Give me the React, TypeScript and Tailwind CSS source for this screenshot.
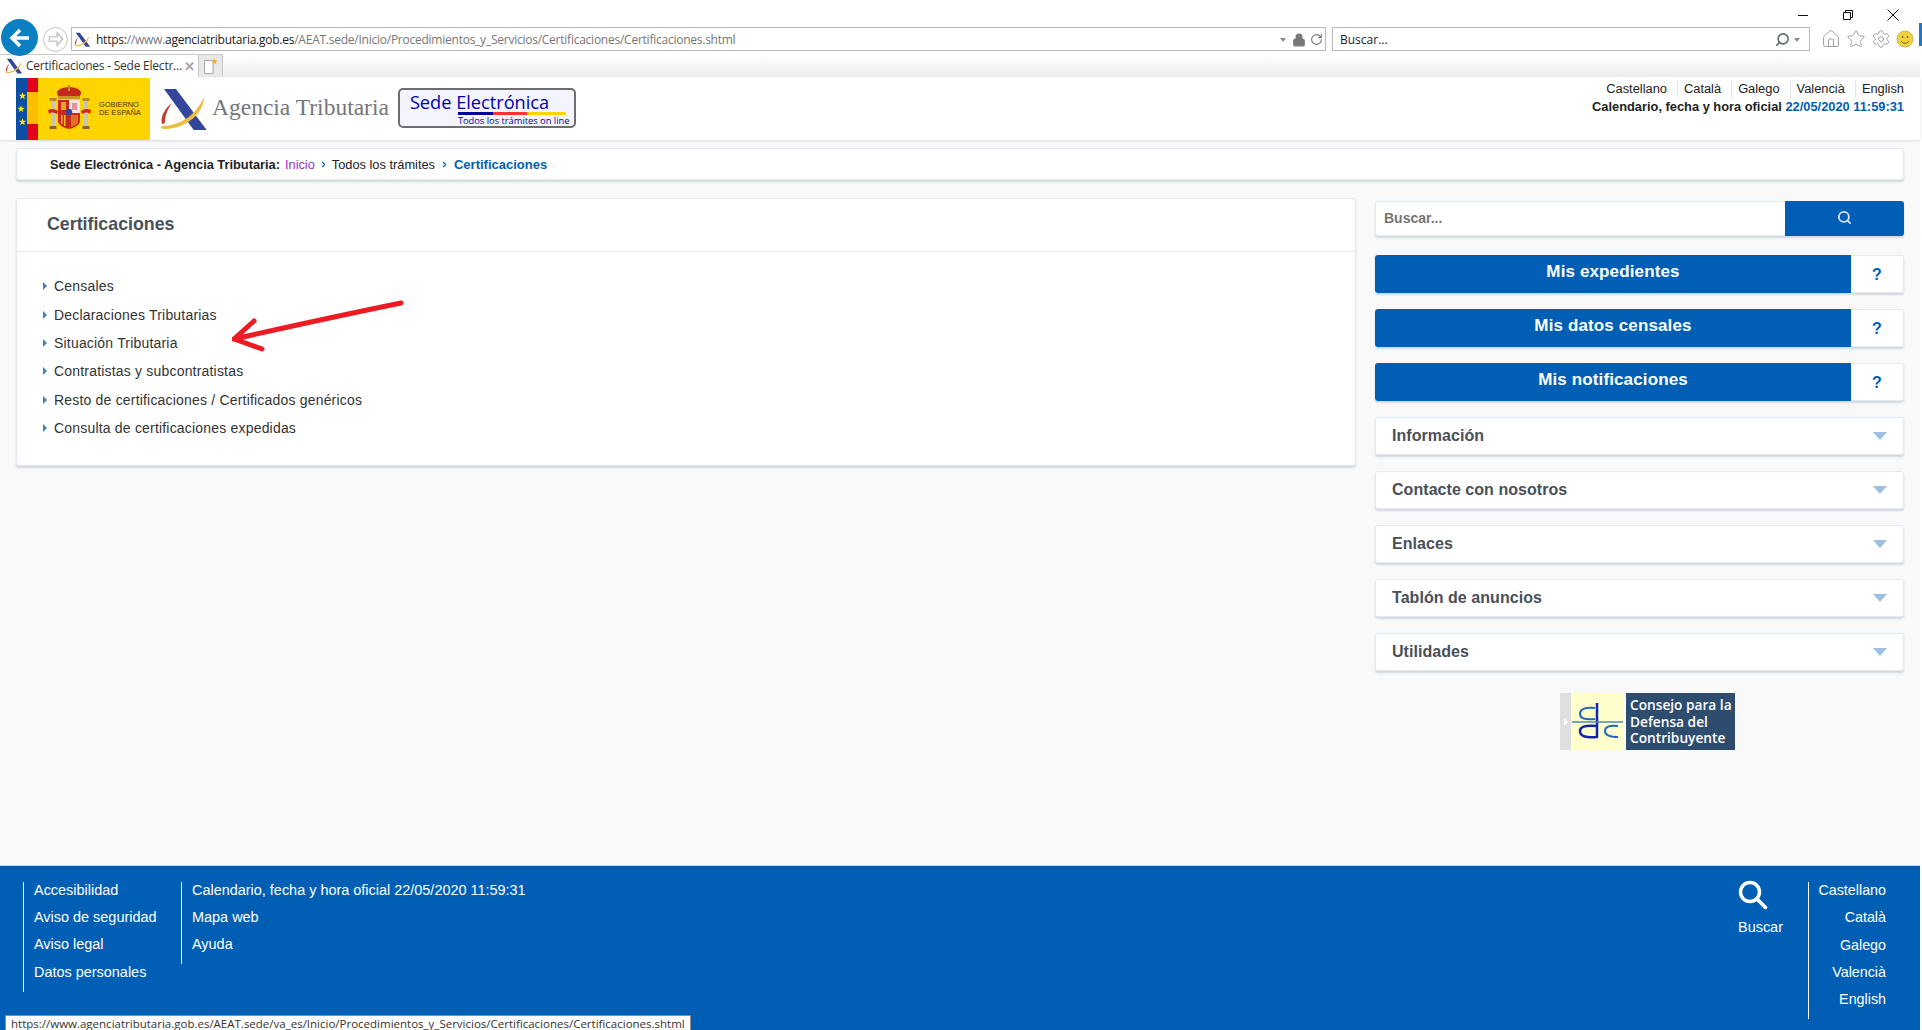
import React from "react";
import { Home, Star, Settings, Search, RotateCw, Lock, ChevronRight } from "lucide-react";

function AeatMark({ className }: { className: string }) {
  return (
    <svg className={className} viewBox="0 0 50 44">
      <path d="M5 2H17L47.7 43H34.7Z" fill="#34459c" />
      <path d="M45 10C45 27 25 43 4 42C1 41 2 38.500 5 39C22 38 37 28 45 10Z" fill="#edbd3e" />
      <path d="M13 16C6 21 1 30 3 37C5 37 5.500 36 6 35C6 29 8 23 13 16Z" fill="#c23b2b" />
    </svg>
  );
}

const STAR = "M0 -3.800L1 -1.200 3.700 -1.200 1.500 .5 2.300 3.200 0 1.600 -2.300 3.200 -1.500 .5 -3.700 -1.200 -1 -1.200Z";

function GobiernoLogo() {
  return (
    <svg className="w-[134px] h-[62px] shrink-0" viewBox="0 0 134 62">
      <rect width="134" height="62" fill="#ffd400" />
      <rect width="11.500" height="62" fill="#0b4ea2" />
      <rect x="11" width="11" height="62" fill="#e3001b" />
      <rect x="11" y="14" width="11" height="32" fill="#ffbd00" />
      <g fill="#ffe600">
        <path transform="translate(6.500 18)" d={STAR} />
        <path transform="translate(5 31)" d={STAR} />
        <path transform="translate(6.500 44)" d={STAR} />
      </g>
      <rect x="35" y="22" width="4" height="26" fill="#c9c4b2" />
      <rect x="68" y="22" width="4" height="26" fill="#c9c4b2" />
      <rect x="33.500" y="20" width="7" height="3" fill="#b98a1e" />
      <rect x="66.500" y="20" width="7" height="3" fill="#b98a1e" />
      <rect x="33.500" y="48" width="7" height="3" fill="#8a6a1a" />
      <rect x="66.500" y="48" width="7" height="3" fill="#8a6a1a" />
      <path d="M32 32C36 30 39 31 42 33L41 36C38 34 35 34 33 36ZM75 32C71 30 68 31 65 33L66 36C69 34 72 34 74 36Z" fill="#d8261c" />
      <ellipse cx="53" cy="15" rx="12" ry="6" fill="#c5281c" />
      <rect x="42" y="18" width="22" height="3" fill="#c9971c" />
      <rect x="52" y="7" width="2" height="6" fill="#b98a1e" />
      <path d="M42 22H64V43C64 47 58 50 53 51C48 50 42 47 42 43Z" fill="#c8281e" />
      <rect x="53" y="22" width="11" height="13" fill="#efe6e2" />
      <path d="M56 25h5v7h-5z" fill="#e58fa0" />
      <path d="M45 24h5v8h-5z" fill="#e0a91f" />
      <path d="M45 37h1.500v9H45zM48 37h1.500v11H48z" fill="#f0b92a" />
      <path d="M55 37h7v7c-1 3-4 4-7 5z" fill="#e3701f" />
      <circle cx="53" cy="34" r="3.200" fill="#264a9c" />
      <text x="83" y="29" fontFamily="'Liberation Sans', sans-serif" fontSize="7.400" fill="#3f3408">GOBIERNO</text>
      <text x="83" y="37" fontFamily="'Liberation Sans', sans-serif" fontSize="7.400" fill="#3f3408">DE ESPAÑA</text>
    </svg>
  );
}

function SedeBadge() {
  return (
    <div className="ml-[9px] mt-[11px] w-[178px] h-[40px] shrink-0 rounded-[5px] border-2 border-[#6e6e6e] bg-[#f4f4ff] pl-[10px] pt-[1px] text-[#0000aa] font-['Open_Sans',sans-serif]">
      <div className="text-[18.200px] leading-[22px] whitespace-nowrap">
        Sede <span>Electrónica</span>
      </div>
      <div className="ml-[48px] mt-[-1px] flex h-[3px] w-[108px]">
        <div className="w-[35px] bg-[#000099]" />
        <div className="w-[34px] bg-[#ff3333]" />
        <div className="w-[39px] bg-[#ffd400]" />
      </div>
      <div className="ml-[48px] text-[9.300px] leading-[11px] whitespace-nowrap">Todos los trámites on line</div>
    </div>
  );
}

function ConsejoBanner() {
  return (
    <div className="mt-[22px] ml-[185px] flex h-[57px] w-[175px] bg-white">
      <div className="flex w-[11px] items-center justify-center bg-[#dfdfdf]">
        <div className="h-0 w-0 border-y-[4px] border-l-[4px] border-y-transparent border-l-white" />
      </div>
      <div className="w-[53px] bg-[#ffffcc]">
        <svg className="h-[57px] w-[53px]" viewBox="0 0 53 57" fill="none">
          <path d="M26 10V45" stroke="#1024b0" strokeWidth="2.500" />
          <path d="M1 29H52" stroke="#4f86b8" strokeWidth="1.500" />
          <path d="M24 15C12 14 9 17 9 21C9 25 13 27 24 26" stroke="#1f68c0" strokeWidth="2" />
          <path d="M26 33C13 32 9 34 9 38C9 43 14 45 26 44" stroke="#1024b0" strokeWidth="2.500" />
          <path d="M47 33C38 32 34 34 34 38C34 42 38 44 47 44" stroke="#1f68c0" strokeWidth="2" />
        </svg>
      </div>
      <div className="ml-[2px] flex-1 bg-[#2e4d6e] pl-[4px] pt-[4px] font-['Open_Sans',sans-serif] text-[13.700px] font-semibold leading-[16.500px] text-white whitespace-nowrap">
        <div>Consejo para la</div>
        <div>Defensa del</div>
        <div>Contribuyente</div>
      </div>
    </div>
  );
}

function BrowserChrome() {
  return (
    <div className="relative h-[77px] shrink-0 bg-white font-['Open_Sans',sans-serif] text-[#222]">
      <div className="flex h-[27px] justify-end pr-[21px] pt-[9px]">
        <svg className="h-[12px] w-[12px]" viewBox="0 0 12 12"><path d="M1 6.500H11" stroke="#111" /></svg>
        <svg className="ml-[33px] h-[12px] w-[12px]" viewBox="0 0 12 12" fill="none" stroke="#111"><path d="M1.500 3.500H8.500V10.500H1.500ZM3.500 3.500V1.500H10.500V8.500H8.500" /></svg>
        <svg className="ml-[33px] h-[12px] w-[12px]" viewBox="0 0 12 12"><path d="M0.500 0.500L11.500 11.500M11.500 0.500L0.500 11.500" stroke="#111" /></svg>
      </div>
      <div className="flex h-[24px] items-center">
        <div className="z-10 ml-[43px] flex h-[25px] w-[25px] items-center justify-center rounded-full border border-[#c4c4c4] bg-white">
          <svg className="h-[18px] w-[18px]" viewBox="0 0 16 16" fill="none" stroke="#b5b5b5"><path d="M2 6H9V2.500L14 8L9 13.500V10H2Z" /></svg>
        </div>
        <div className="ml-[3px] flex h-[24px] w-[1255px] items-center border border-[#b9b9b9] pl-[2px] pt-[1px] text-[12px] whitespace-nowrap">
          <AeatMark className="h-[15px] w-[17px]" />
          <span className="ml-[5px] tracking-[-0.245px] text-[#777]">
            <span className="text-[#222]">https:</span>//www.<span className="text-[#222]">agenciatributaria.gob.es</span>/AEAT.sede/Inicio/Procedimientos_y_Servicios/Certificaciones/Certificaciones.shtml
          </span>
          <div className="ml-auto flex items-center pr-[2px] text-[#777]">
            <div className="mr-[6px] h-0 w-0 border-x-[3.500px] border-t-[4px] border-x-transparent border-t-[#888]" />
            <Lock size={14} fill="#777" strokeWidth={2} className="mr-[2px]" />
            <RotateCw size={13} strokeWidth={2} className="ml-[2px]" />
          </div>
        </div>
        <div className="ml-[6px] flex h-[24px] w-[478px] items-center border border-[#b9b9b9] pl-[7px] pt-[1px] text-[12px] text-[#222]">
          Buscar...
          <Search size={15} strokeWidth={2.500} className="ml-auto -scale-x-100 text-[#5f6b70]" />
          <div className="ml-[4px] mr-[9px] h-0 w-0 border-x-[3.500px] border-t-[4px] border-x-transparent border-t-[#888]" />
        </div>
        <div className="ml-[11px] flex items-center gap-[5px] text-[#8f8f8f]">
          <Home size={20} strokeWidth={1} />
          <Star size={20} strokeWidth={1} />
          <Settings size={20} strokeWidth={1} />
          <svg className="h-[18px] w-[18px]" viewBox="0 0 18 18">
            <circle cx="9" cy="9" r="8" fill="#f2d13e" stroke="#c9b659" />
            <circle cx="6.500" cy="7" r="1" fill="#7a6a20" />
            <circle cx="11.500" cy="7" r="1" fill="#7a6a20" />
            <path d="M5 11C7 14 11 14 13 11" fill="none" stroke="#7a6a20" />
          </svg>
        </div>
      </div>
      <div className="mt-[3px] flex h-[23px] bg-gradient-to-b from-white to-[#eeeeee]">
        <div className="flex w-[199px] items-center border-t border-r border-[#c9c9c9] bg-white pl-[5px] text-[12px] whitespace-nowrap">
          <AeatMark className="h-[16px] w-[18px]" />
          <span className="ml-[3px] tracking-[-0.230px] text-[#333]">Certificaciones - Sede Electr...</span>
          <span className="ml-auto mr-[3px] text-[13px] font-bold leading-none text-[#a5a5a5]">✕</span>
        </div>
        <div className="flex w-[24px] items-center justify-center border-t border-r border-[#c9c9c9] bg-[#e8e8e8]">
          <svg className="h-[18px] w-[16px]" viewBox="0 0 16 18">
            <path d="M1.500 3.500H10V16.500H1.500Z" fill="#fff" stroke="#a9a9a9" />
            <path d="M11.500 1L12.300 3.200 14.500 3.500 12.800 5 13.300 7.200 11.500 6 9.700 7.200 10.200 5 8.500 3.500 10.700 3.200Z" fill="#f5a623" />
          </svg>
        </div>
      </div>
      <div className="absolute left-[1px] top-[19px] z-20 flex h-[37px] w-[37px] items-center justify-center rounded-full bg-[#0a80c3]">
        <svg className="h-[24px] w-[24px]" viewBox="0 0 24 24" fill="none" stroke="#fff" strokeWidth="3.500"><path d="M21 12H4M12 4L4 12L12 20" /></svg>
      </div>
    </div>
  );
}

function PageHeader() {
  return (
    <div className="relative z-10 flex h-[63px] shrink-0 bg-white pl-[16px] shadow-[0_1px_2px_rgba(0,0,0,0.12)]">
      <div className="mt-[1px]"><GobiernoLogo /></div>
      <AeatMark className="ml-[9px] mt-[10px] h-[44px] w-[50px] shrink-0" />
      <div className="ml-[3px] mt-[15px] font-['Liberation_Serif',serif] text-[23.500px] leading-[30px] whitespace-nowrap text-[#75777a]">Agencia Tributaria</div>
      <SedeBadge />
      <div className="ml-auto pr-[16px] pt-[4px] text-right text-[12.850px] text-[#222]">
        <div className="flex h-[17px] justify-end leading-[16px]">
          {["Castellano", "Català", "Galego", "Valencià"].map((l) => (
            <span key={l} className="mr-[6px] border-r border-[#dfe5ee] pr-[10px]">{l}</span>
          ))}
          <span>English</span>
        </div>
        <div className="mt-[1px] leading-[16px] font-bold">
          Calendario, fecha y hora oficial <span className="text-[#005fb5]">22/05/2020 11:59:31</span>
        </div>
      </div>
    </div>
  );
}

const card = "rounded-[3px] border border-[#e4eaf2] bg-white shadow-[0_2px_2px_rgba(120,140,170,0.3)]";
const links = ["Censales", "Declaraciones Tributarias", "Situación Tributaria", "Contratistas y subcontratistas", "Resto de certificaciones / Certificados genéricos", "Consulta de certificaciones expedidas"];

function MainCard() {
  return (
    <div className={`${card} relative h-[268px] w-[1340px] shrink-0`}>
      <div className="flex h-[53px] items-center border-b border-[#e4eaf2] pb-[1px] pl-[30px] text-[17.800px] font-bold text-[#4a5058]">Certificaciones</div>
      <ul className="pl-[26px] pt-[20.500px] text-[14px] text-[#333]">
        {links.map((t) => (
          <li key={t} className="flex h-[28.400px] items-center">
            <div className="mb-[1px] h-0 w-0 border-y-[4.500px] border-l-[4px] border-y-transparent border-l-[#3f7fbd]" />
            <span className="ml-[7px] tracking-[0.190px]">{t}</span>
          </li>
        ))}
      </ul>
      <svg className="absolute left-[215px] top-[100px] h-[55px] w-[175px]" viewBox="0 0 175 55" fill="none" stroke="#ed1c24" strokeWidth="5" strokeLinecap="round" strokeLinejoin="round">
        <path d="M169 4C120 14 60 27 2 40M22 22L2 40L30 50" />
      </svg>
    </div>
  );
}

function ActionButton({ label }: { label: string }) {
  return (
    <div className="flex h-[38px] rounded-[3px] shadow-[0_2px_2px_rgba(120,140,170,0.3)]">
      <div className="flex w-[476px] justify-center rounded-l-[3px] bg-[#005fb5] pt-[7px] text-[17px] font-bold leading-[20px] tracking-[0.130px] text-white">{label}</div>
      <div className="flex flex-1 items-center justify-center rounded-r-[3px] border border-l-0 border-[#e4eaf2] bg-white pt-[2px] text-[16px] font-bold text-[#005fb5]">?</div>
    </div>
  );
}

function Accordion({ label }: { label: string }) {
  return (
    <div className={`${card} flex h-[38px] items-center justify-between pl-[16px] pr-[16px] text-[16px] font-bold tracking-[0.050px] text-[#4a5058]`}>
      {label}
      <div className="h-0 w-0 border-x-[7.500px] border-t-[8px] border-x-transparent border-t-[#9dbfe0]" />
    </div>
  );
}

function Sidebar() {
  return (
    <div className="ml-[19px] w-[529px] shrink-0 pt-[3px]">
      <div className="flex h-[35px] rounded-[3px] shadow-[0_2px_2px_rgba(120,140,170,0.3)]">
        <div className="flex flex-1 items-center rounded-l-[3px] border border-r-0 border-[#e4eaf2] bg-white pl-[8px] text-[14px] font-bold text-[#757575]">Buscar...</div>
        <div className="flex w-[119px] items-center justify-center rounded-r-[3px] bg-[#005fb5] pb-[2px]">
          <Search size={15} strokeWidth={3} className="text-[#d5e4f3]" />
        </div>
      </div>
      <div className="mt-[19px] flex flex-col gap-[16px]">
        <ActionButton label="Mis expedientes" />
        <ActionButton label="Mis datos censales" />
        <ActionButton label="Mis notificaciones" />
      </div>
      <div className="mt-[16px] flex flex-col gap-[16px]">
        {["Información", "Contacte con nosotros", "Enlaces", "Tablón de anuncios", "Utilidades"].map((l) => (
          <Accordion key={l} label={l} />
        ))}
      </div>
      <ConsejoBanner />
    </div>
  );
}

function Footer() {
  return (
    <div className="relative flex h-[165px] shrink-0 border-t border-[#c9d4e0] bg-[#005fb5] pt-[16px] text-[14.450px] text-white">
      <div className="ml-[23px] flex h-[110px] w-[158px] flex-col border-l border-white pl-[10px]">
        {["Accesibilidad", "Aviso de seguridad", "Aviso legal", "Datos personales"].map((t) => (
          <div key={t} className="h-[27.200px] leading-[16px] whitespace-nowrap">{t}</div>
        ))}
      </div>
      <div className="flex h-[82px] flex-col border-l border-white pl-[10px]">
        {["Calendario, fecha y hora oficial 22/05/2020 11:59:31", "Mapa web", "Ayuda"].map((t) => (
          <div key={t} className="h-[27.200px] leading-[16px] whitespace-nowrap">{t}</div>
        ))}
      </div>
      <div className="ml-auto flex w-[45px] flex-col items-start">
        <svg className="-mt-[2px] h-[30px] w-[30px]" viewBox="0 0 30 30" fill="none" stroke="#fff" strokeWidth="3.500" strokeLinecap="round">
          <circle cx="12" cy="12" r="9.500" />
          <path d="M19 19L27.500 27.500" />
        </svg>
        <div className="mt-[9px] leading-[16px]">Buscar</div>
      </div>
      <div className="ml-[25px] mr-[34px] flex h-[137px] w-[78px] flex-col items-end border-l border-white text-[14.300px]">
        {["Castellano", "Català", "Galego", "Valencià", "English"].map((t) => (
          <div key={t} className="h-[27.300px] leading-[16px] whitespace-nowrap">{t}</div>
        ))}
      </div>
      <div className="absolute bottom-0 left-[5px] h-[15px] w-[686px] overflow-hidden border border-b-0 border-[#8a8a8a] bg-white pl-[5px] pt-[1px] font-['Open_Sans',sans-serif] text-[11.500px] leading-[14px] whitespace-nowrap text-[#333]">
        https://www.agenciatributaria.gob.es/AEAT.sede/va_es/Inicio/Procedimientos_y_Servicios/Certificaciones/Certificaciones.shtml
      </div>
    </div>
  );
}

export default function App() {
  return (
    <div className="relative h-[1030px] w-[1922px] overflow-hidden bg-white font-['Liberation_Sans',Arial,sans-serif]">
      <div className="flex h-full w-[1920px] flex-col bg-[#f9f9f9]">
        <BrowserChrome />
        <PageHeader />
        <div className="flex-1 px-[16px] pt-[8px]">
          <div className={`${card} flex h-[32px] items-center whitespace-nowrap pl-[33px] pt-[1px] text-[12.800px] text-[#222]`}>
            <span className="font-bold">Sede Electrónica - Agencia Tributaria:</span>
            <span className="ml-[5px] text-[#9933cc]">Inicio</span>
            <ChevronRight size={9} strokeWidth={3} className="mx-[4px] text-[#005fb5]" />
            <span>Todos los trámites</span>
            <ChevronRight size={9} strokeWidth={3} className="mx-[5px] text-[#005fb5]" />
            <span className="text-[13px] font-bold text-[#005fb5]">Certificaciones</span>
          </div>
          <div className="mt-[18px] flex">
            <MainCard />
            <Sidebar />
          </div>
        </div>
        <Footer />
      </div>
      <div className="absolute right-0 top-[23px] h-[23px] w-[3px] bg-[#1f78c8]" />
    </div>
  );
}
